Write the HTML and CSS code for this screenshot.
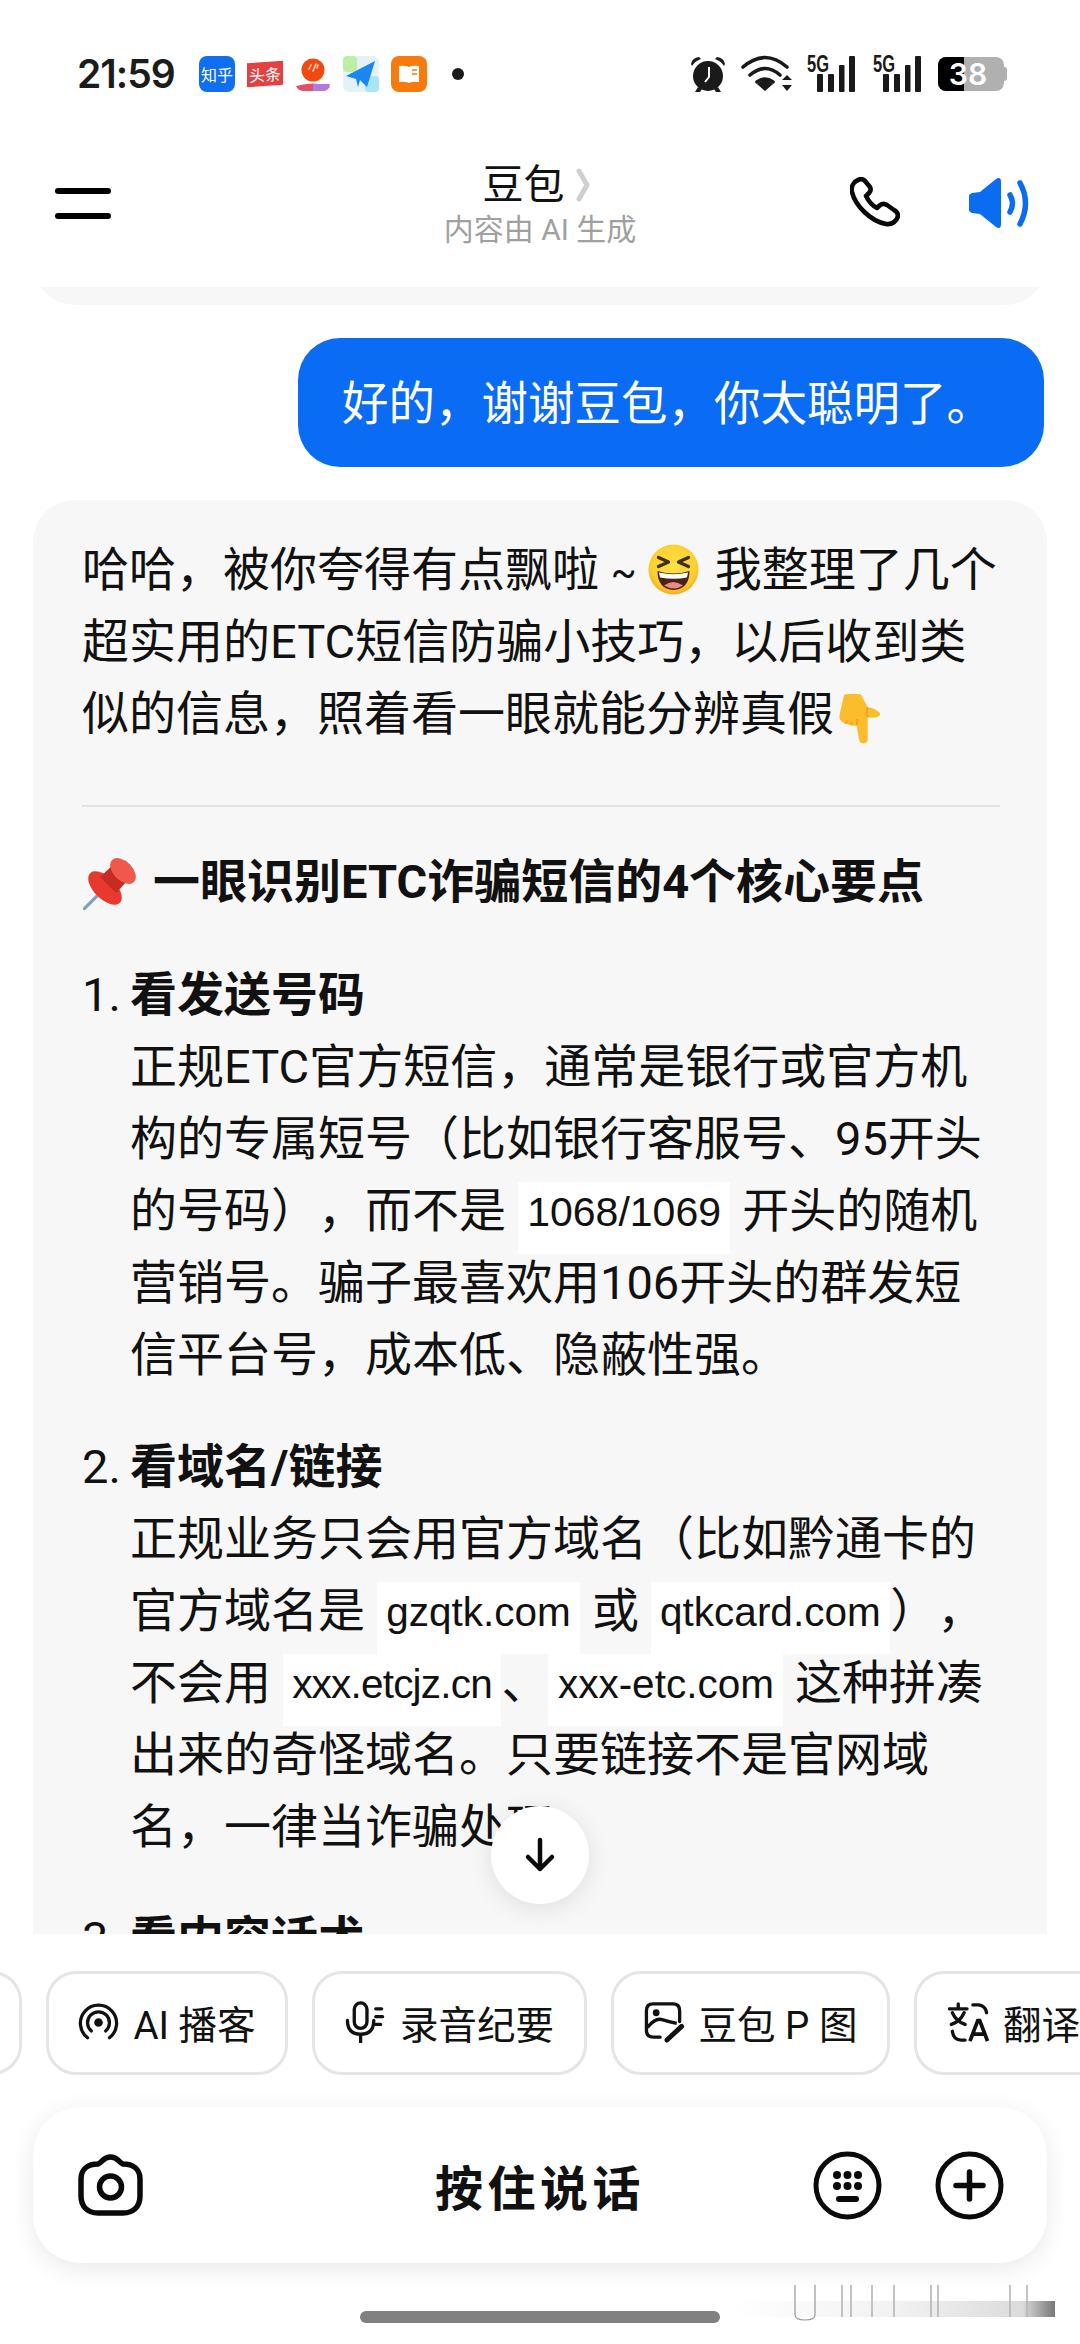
FILE: index.html
```html
<!DOCTYPE html>
<html lang="zh-CN">
<head>
<meta charset="utf-8">
<title>豆包</title>
<link rel="stylesheet" href="styles.css">
</head>
<body>
<div class="phone">
  <div class="status">
    <span class="time">21:59</span>
    <div class="apps">
      <span class="app app-zhihu">知乎</span>
      <span class="app app-toutiao">头条</span>
      <svg class="app" viewBox="0 0 36 36"><circle cx="18" cy="14" r="11.500" fill="#ee4a12"/><path d="M14 13l2-4M18 15l3-7M22 12l1-3" stroke="#ffd9c8" stroke-width="1.500" stroke-linecap="round"/><path d="M1 30q17-5 34 0q-2 5-8 5H9q-6 0-8-5z" fill="#e0506a"/><path d="M18 28h17q-2 7-8 7h-9z" fill="#b27ae0"/></svg>
      <svg class="app" viewBox="0 0 36 36"><rect width="36" height="36" rx="6" fill="#e4f1f6"/><rect width="14" height="16" rx="4" fill="#bdeea6"/><rect x="22" y="20" width="14" height="16" rx="4" fill="#a9e4f8"/><path d="M3 20L32 5L24 31L17 24L15 31L13 23z" fill="#1a86ef"/></svg>
      <svg class="app" viewBox="0 0 36 36"><rect width="36" height="36" rx="8" fill="#f77a0c"/><path d="M8 10q6-1 10 1q4-2 10-1v16q-6-1-10 1q-4-2-10-1z" fill="#fff"/><path d="M21 14h5M21 18h5" stroke="#f77a0c" stroke-width="1.500"/></svg>
      <span class="dot"></span>
    </div>
    <div class="sys">
      <svg class="i-alarm" viewBox="0 0 36 38"><circle cx="18" cy="21" r="15" fill="#1a1a1a"/><path d="M19 12v10l-4 5" fill="none" stroke="#fff" stroke-width="2"/><path d="M1 9q1-6 8-7l2 2q-6 2-9 7zM35 9q-1-6-8-7l-2 2q6 2 9 7z" fill="#1a1a1a"/><path d="M8 32l-3 5h5l2-3zM28 32l3 5h-5l-2-3z" fill="#1a1a1a"/></svg>
      <svg class="i-wifi" viewBox="0 0 51 37"><path d="M2 12q22-19 44 0M9 20q15-13 30 0M16 27q8-6 16 0" fill="none" stroke="#1a1a1a" stroke-width="3.600" stroke-linecap="round"/><path d="M16 29l8-5 8 5-8 7z" fill="#1a1a1a"/><path d="M41 25l5-5 5 5zM41 30h10l-5 6z" fill="#1a1a1a"/></svg>
      <svg class="i-sig" viewBox="0 0 48 37"><text x="0" y="17" class="sig-text" textLength="22" lengthAdjust="spacingAndGlyphs">5G</text><rect x="10" y="19" width="6" height="18" rx="1"/><rect x="21" y="19" width="6" height="18" rx="1"/><rect x="32" y="10" width="5.500" height="27" rx="1"/><rect x="42" y="1" width="6" height="36" rx="1"/></svg>
      <svg class="i-sig" viewBox="0 0 48 37"><text x="0" y="17" class="sig-text" textLength="22" lengthAdjust="spacingAndGlyphs">5G</text><rect x="10" y="19" width="6" height="18" rx="1"/><rect x="21" y="19" width="6" height="18" rx="1"/><rect x="32" y="10" width="5.500" height="27" rx="1"/><rect x="42" y="1" width="6" height="36" rx="1"/></svg>
      <div class="battery"><span class="batt-fill"></span><span class="batt-num">38</span><span class="batt-tip"></span></div>
    </div>
  </div>

  <header class="topbar">
    <div class="menu"><span></span><span></span></div>
    <div class="title">
      <div class="title-main">豆包<svg class="chev" viewBox="0 0 14 34"><path d="M3 3l8 14-8 14" fill="none" stroke="#cfcfcf" stroke-width="5" stroke-linecap="round" stroke-linejoin="round"/></svg></div>
      <div class="title-sub">内容由 AI 生成</div>
    </div>
    <div class="top-actions">
      <svg class="i-phone" viewBox="0 0 50 50"><path d="M8 3C3 5 1 10 2 15C5 28 20 44 36 47C42 48 47 44 48 39C48 36 46 34 44 33L37 28C34 26 31 27 29 29L27 31C21 28 18 23 16 19L19 16C21 14 21 12 20 10L15 4C13 2 10 2 8 3Z" fill="none" stroke="#0a0a0a" stroke-width="4.600" stroke-linejoin="round"/></svg>
      <svg class="i-speaker" viewBox="0 0 63 52"><path d="M2 19q0-2 3-3l8-1 16-13q5-3 5 3v42q0 6-5 3L13 37l-8-1q-3-1-3-3z" fill="#0a6cf0"/><path d="M43 18q5 8 0 17M53 6q11 20 0 41" fill="none" stroke="#0a6cf0" stroke-width="5.500" stroke-linecap="round"/></svg>
    </div>
  </header>

  <main class="chat">
    <div class="prev-bubble"></div>
    <div class="user-bubble">好的，谢谢豆包，你太聪明了。</div>
    <div class="bot-bubble">
      <p class="para">哈哈，被你夸得有点飘啦 <span class="tilde">~</span> <svg class="emoji" viewBox="0 0 51 51"><defs><radialGradient id="face" cx=".5" cy=".42" r=".6"><stop offset="0" stop-color="#fde047"/><stop offset=".75" stop-color="#fbd02e"/><stop offset="1" stop-color="#f4a423"/></radialGradient></defs><circle cx="25.500" cy="25.500" r="25" fill="url(#face)"/><path d="M10.500 13.500l10 4.500-10 4.500M40.500 13.500l-10 4.500 10 4.500" fill="none" stroke="#3e3018" stroke-width="3.400" stroke-linecap="round" stroke-linejoin="round"/><path d="M9.500 27q16 5 32 0q0 18-16 19Q9.500 45 9.500 27z" fill="#4a2312"/><path d="M11 28.500q14.500 3.500 29 0l-1 5q-13 2.500-27 0z" fill="#fff"/><path d="M16 41.500q9-7 19 0q-9 6-19 0z" fill="#ee8a86"/></svg> 我整理了几个<br>超实用的ETC短信防骗小技巧，以后收到类<br>似的信息，照着看一眼就能分辨真假<svg class="emoji-hand" viewBox="0 0 42 51"><path d="M5.300 1.500Q14 0 22 1.500L28.700 14.300Q35 15 40.300 19.300Q42.500 22 39 23.800Q35 25.500 28.700 24.300L28.700 47.700Q26.500 51 23.700 50.300Q21 50 20.300 47.700L17.700 32.700Q13 33 10.300 31.700Q6 31.500 3.700 29.300Q0 27 .5 22.700Q3 10 5.300 1.500Z" fill="#fbbd2c"/><path d="M8 27.500l-1 3M13 29l-1 2.500M18 26l-.3 6M28.700 14.300Q27 20 28.700 24.300" stroke="#e39c18" stroke-width="1.300" fill="none"/></svg></p>
      <hr class="rule">
      <h2 class="heading"><svg class="emoji-pin" viewBox="0 0 53 52"><path d="M1 51L17 35" stroke="#7fa3b8" stroke-width="3.200" stroke-linecap="round"/><ellipse cx="22" cy="30" rx="21" ry="11" transform="rotate(45 22 30)" fill="#e8392f"/><path d="M17 19L31 6 46 21 33 35z" fill="#c92a22"/><ellipse cx="40" cy="13" rx="15.500" ry="9.500" transform="rotate(45 40 13)" fill="#f0584b"/></svg>一眼识别ETC诈骗短信的4个核心要点</h2>

      <div class="item">
        <span class="num">1.</span>
        <div class="item-body">
          <strong class="item-title">看发送号码</strong>
          <p class="para">正规ETC官方短信，通常是银行或官方机<br>构的专属短号（比如银行客服号、95开头<br>的号码），而不是 <code class="code">1068/1069</code> 开头的随机<br>营销号。骗子最喜欢用106开头的群发短<br>信平台号，成本低、隐蔽性强。</p>
        </div>
      </div>

      <div class="item">
        <span class="num">2.</span>
        <div class="item-body">
          <strong class="item-title">看域名/链接</strong>
          <p class="para">正规业务只会用官方域名（比如黔通卡的<br>官方域名是 <code class="code code-name">gzqtk.com</code> 或 <code class="code code-name">qtkcard.com</code>），<br>不会用 <code class="code code-name code-tight">xxx.etcjz.cn</code>、<code class="code code-name">xxx-etc.com</code> 这种拼凑<br>出来的奇怪域名。只要链接不是官网域<br>名，一律当诈骗处理。</p>
        </div>
      </div>

      <div class="item">
        <span class="num">3.</span>
        <div class="item-body">
          <strong class="item-title">看内容话术</strong>
        </div>
      </div>
    </div>
    <button class="scroll-down" aria-label="向下"><svg viewBox="0 0 34 36"><path d="M17 3v29M5 20l12 12 12-12" fill="none" stroke="#0a0a0a" stroke-width="4.500" stroke-linecap="round" stroke-linejoin="round"/></svg></button>
  </main>

  <div class="chips">
    <div class="chip chip-cut"></div>
    <div class="chip chip-a">
      <svg class="chip-icon" viewBox="0 0 43 43"><path d="M10 38A19 19 0 1 1 33 38" fill="none" stroke="#111" stroke-width="3.400" stroke-linecap="round"/><path d="M14 31A11.500 11.500 0 1 1 29 31" fill="none" stroke="#111" stroke-width="3.400" stroke-linecap="round"/><circle cx="21.500" cy="22" r="4.500" fill="#111"/></svg>
      <span>AI 播客</span>
    </div>
    <div class="chip chip-b">
      <svg class="chip-icon" viewBox="0 0 41 43"><rect x="9" y="2" width="13" height="26" rx="6.500" fill="none" stroke="#111" stroke-width="3.400"/><path d="M2 20q0 14 13.500 14T29 20M15.500 34v8" fill="none" stroke="#111" stroke-width="3.400" stroke-linecap="round"/><path d="M31 8h6M31 16h7M31 24h5" stroke="#111" stroke-width="3.400" stroke-linecap="round"/></svg>
      <span>录音纪要</span>
    </div>
    <div class="chip chip-c">
      <svg class="chip-icon" viewBox="0 0 41 43"><path d="M16 37H9q-7 0-7-7V10q0-7 7-7h20q7 0 7 7v11" fill="none" stroke="#111" stroke-width="3.400" stroke-linecap="round"/><circle cx="12" cy="12" r="3.500" fill="#111"/><path d="M3 27q8-10 15-8t15 4" fill="none" stroke="#111" stroke-width="3.400"/><path d="M23 40l15-14" stroke="#111" stroke-width="5" stroke-linecap="round"/></svg>
      <span>豆包 P 图</span>
    </div>
    <div class="chip chip-d">
      <svg class="chip-icon" viewBox="0 0 41 43"><path d="M10 3v4M1 8h18M4 12q4 9 13 12M16 12q-4 9-13 12" fill="none" stroke="#111" stroke-width="3.400" stroke-linecap="round"/><path d="M25 4h6q7 1 8 8M4 31q1 9 9 9h4" fill="none" stroke="#111" stroke-width="3.400" stroke-linecap="round"/><path d="M22 41l8-21h2l8 21M25 34h12" fill="none" stroke="#111" stroke-width="3.800"/></svg>
      <span>翻译</span>
    </div>
  </div>

  <div class="composer">
    <svg class="i-camera" viewBox="0 0 65 62"><path d="M20 10C24 9 25 3 32.500 3C40 3 41 9 45 10C55 10 62 15 62 25V42C62 53 55 59 45 59H20C10 59 3 53 3 42V25C3 15 10 10 20 10Z" fill="none" stroke="#0a0a0a" stroke-width="5.500"/><circle cx="32.500" cy="33" r="11" fill="none" stroke="#0a0a0a" stroke-width="5.500"/></svg>
    <span class="hold">按住说话</span>
    <div class="composer-right">
      <svg class="i-round" viewBox="0 0 69 69"><circle cx="34.500" cy="34.500" r="31.500" fill="none" stroke="#0a0a0a" stroke-width="5"/><g fill="#0a0a0a"><circle cx="24" cy="24" r="4"/><circle cx="34.500" cy="24" r="4"/><circle cx="45" cy="24" r="4"/><circle cx="24" cy="35" r="4"/><circle cx="34.500" cy="35" r="4"/><circle cx="45" cy="35" r="4"/><rect x="23" y="45" width="23" height="6" rx="3"/></g></svg>
      <svg class="i-round" viewBox="0 0 69 69"><circle cx="34.500" cy="34.500" r="31.500" fill="none" stroke="#0a0a0a" stroke-width="5"/><path d="M34.500 21v27M21 34.500h27" stroke="#0a0a0a" stroke-width="5.500" stroke-linecap="round"/></svg>
    </div>
  </div>

  <div class="home-bar"></div>
  <svg class="smear" viewBox="0 0 325 37" preserveAspectRatio="none"><defs><linearGradient id="sm" x1="0" x2="1" y1="0" y2="0"><stop offset="0" stop-color="#fff"/><stop offset=".5" stop-color="#f2f2f2"/><stop offset=".9" stop-color="#dcdcdc"/><stop offset="1" stop-color="#777"/></linearGradient></defs><rect y="16" width="325" height="16" fill="url(#sm)"/><path d="M65 0v30q0 5 10 5t10-5V0" fill="none" stroke="#999" stroke-width="1.200"/><path d="M112 0v32M121 0v32M142 0v32M164 0v32M201 0v32M208 0v32M280 0v32M297 0v32" stroke="#b5b5b5" stroke-width="1.600"/></svg>
</div>
</body>
</html>
```
FILE: styles.css
```css
* { box-sizing: border-box; }
html, body { margin: 0; padding: 0; background: #fff; }
body { font-family: Roboto, "Noto Sans CJK SC", sans-serif; color: #111; text-spacing-trim: space-all; }
p, h2 { margin: 0; }

.phone { position: relative; width: 1080px; height: 2344px; overflow: hidden; display: flex; flex-direction: column; background: #fff; }

/* status bar */
.status { height: 126px; flex: none; display: flex; align-items: flex-start; padding: 55px 76px 0 77px; }
.time { font-family: Inter, sans-serif; font-size: 39px; font-weight: 600; line-height: 38px; letter-spacing: -1px; color: #1c1c1c; width: 122px; }
.apps { display: flex; align-items: center; gap: 12px; height: 37px; }
.app { width: 36px; height: 36px; display: flex; align-items: center; justify-content: center; flex: none; font-size: 16px; color: #fff; }
.app-zhihu { background: #0f6ff0; border-radius: 8px; }
.app-toutiao { background: #e4403f; height: 24px; transform: skewY(-4deg); }
.dot { width: 12px; height: 12px; border-radius: 50%; background: #1a1a1a; margin-left: 13px; }
.sys { margin-left: auto; display: flex; align-items: center; height: 37px; gap: 15px; }
.i-alarm { width: 36px; height: 38px; flex: none; }
.i-wifi { width: 51px; height: 37px; flex: none; }
.i-sig { width: 48px; height: 37px; flex: none; fill: #1a1a1a; overflow: visible; }
.sig-text { font-family: "Liberation Sans", sans-serif; font-size: 23px; font-weight: 700; }
.i-sig + .i-sig { margin-left: 3px; }
.battery { position: relative; width: 66px; height: 34px; border-radius: 8px; background: #b0b0b0; display: flex; align-items: center; justify-content: center; overflow: visible; margin-left: 2px; }
.batt-fill { position: absolute; left: 0; top: 0; bottom: 0; width: 26px; background: #000; border-radius: 8px 0 0 8px; }
.batt-num { position: relative; font-family: Inter, sans-serif; font-size: 30px; font-weight: 600; color: #fff; line-height: 34px; margin-left: -6px; }
.batt-tip { position: absolute; right: -3px; top: 10px; width: 3px; height: 14px; background: #b0b0b0; border-radius: 0 3px 3px 0; }

/* top bar */
.topbar { height: 161px; flex: none; display: flex; align-items: flex-start; position: relative; padding: 0 50px 0 55px; }
.menu { display: flex; flex-direction: column; gap: 19px; width: 56px; margin-top: 62px; }
.menu span { display: block; height: 6px; background: #000; border-radius: 3px; }
.title { position: absolute; left: 0; right: 0; top: 33px; text-align: center; }
.title-main { font-size: 41px; line-height: 52px; color: #111; display: flex; justify-content: center; align-items: center; gap: 11px; padding-right: 8px; }
.chev { width: 14px; height: 34px; }
.title-sub { font-size: 30px; line-height: 38px; color: #a0a0a0; }
.top-actions { margin-left: auto; display: flex; gap: 67px; margin-top: 51px; }
.i-phone { width: 50px; height: 50px; }
.i-speaker { width: 63px; height: 52px; }

/* chat */
.chat { height: 1647px; flex: none; overflow: hidden; position: relative; display: flex; flex-direction: column; align-items: flex-end; padding: 0 33px; }
.prev-bubble { align-self: stretch; flex: none; height: 60px; margin-top: -42px; background: #f7f7f7; border-radius: 0 0 42px 42px; }
.user-bubble { flex: none; margin: 33px 3px 0 0; height: 129px; width: 746px; border-radius: 42px; background: #0a6cf5; color: #fff; font-size: 46.5px; line-height: 129px; padding: 2px 0 0 44px; }
.bot-bubble { flex: none; align-self: stretch; margin-top: 33px; padding: 34px 47px 0 49px; background: #f7f7f7; border-radius: 42px 42px 0 0; }
.para { font-size: 47px; line-height: 72px; white-space: nowrap; }
.tilde { font-size: 38px; line-height: 0; }
.emoji { width: 51px; height: 51px; margin: -15px 4px -15px 0; vertical-align: 6px; }
.emoji-hand { width: 42px; height: 51px; margin: -15px 0 -15px 5px; vertical-align: 1px; }
.emoji-pin { width: 53px; height: 52px; margin: -15px 17px -15px 1px; vertical-align: 3px; }
.rule { border: 0; height: 2px; background: #e2e2e2; margin: 55px 0 37px; }
.heading { font-size: 47px; line-height: 72px; font-weight: 700; white-space: nowrap; padding-top: 2px; height: 72px; }
.item { display: flex; margin-top: 43px; font-size: 47px; line-height: 72px; }
.item + .item { margin-top: 40px; }
.num { width: 48px; flex: none; }
.item-title { display: block; font-weight: 700; }
.code { display: inline-block; height: 72px; margin: 7px 0 -7px; line-height: 60px; padding: 0 9.5px; background: #fff; font-family: "Liberation Sans", sans-serif; font-size: 41px; vertical-align: top; }
.code-name { font-size: 40.5px; }
.code-tight { letter-spacing: -.8px; }

.scroll-down { position: absolute; left: 491px; top: 1519px; width: 98px; height: 98px; border: 0; padding: 0; border-radius: 50%; background: #fff; box-shadow: 0 4px 24px rgba(0,0,0,.10); display: flex; align-items: center; justify-content: center; }
.scroll-down svg { width: 34px; height: 36px; }

/* chips */
.chips { flex: none; display: flex; gap: 24px; margin-top: 37px; height: 104px; overflow: hidden; }
.chip { flex: none; height: 104px; border: 3px solid #e5e5e5; border-radius: 30px; background: #fff; display: flex; align-items: center; justify-content: center; gap: 14px; font-size: 38.500px; color: #111; white-space: nowrap; padding-bottom: 3px; }
.chip-cut { width: 120px; margin-left: -98px; }
.chip-a { width: 242px; }
.chip-b { width: 275px; }
.chip-c { width: 279px; }
.chip-d { width: 300px; justify-content: flex-start; padding-left: 31px; }
.chip-icon { width: 41px; height: 42px; flex: none; }

/* composer */
.composer { flex: none; position: relative; margin: 32px 33px 0; height: 156px; border-radius: 48px; background: #fff; box-shadow: 0 6px 26px rgba(0,0,0,.09); display: flex; align-items: center; padding: 0 43px 0 45px; }
.i-camera { width: 65px; height: 62px; }
.hold { position: absolute; left: 0; right: 0; text-align: center; font-size: 48px; font-weight: 700; letter-spacing: 4.500px; color: #111; }
.composer-right { margin-left: auto; display: flex; gap: 53px; }
.i-round { width: 69px; height: 69px; }

.home-bar { position: absolute; left: 360px; top: 2311px; width: 360px; height: 12px; border-radius: 6px; background: #808080; }
.smear { position: absolute; left: 730px; top: 2285px; width: 325px; height: 37px; }
```
